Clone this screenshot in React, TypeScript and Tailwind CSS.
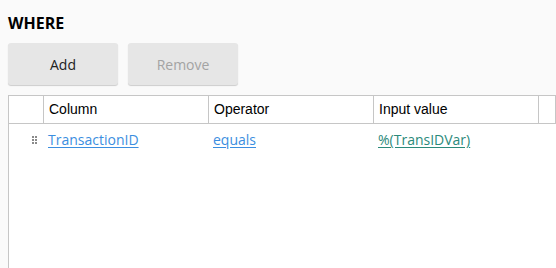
import React from "react";

const cols = "grid grid-cols-[35px_165px_165px_165px_1fr]";

function Grip() {
  return (
    <div className="grid grid-cols-2 gap-x-[1px] gap-y-[1px] w-[5px]">
      {[0, 1, 2, 3, 4, 5].map((i) => (
        <span key={i} className="w-[2px] h-[2px] bg-[#8a8a8a]"></span>
      ))}
    </div>
  );
}

export default function App() {
  return (
    <div className="w-[556px] h-[268px] overflow-hidden bg-[#fafafa] pl-2 pt-[12px] font-['Open_Sans',sans-serif]">
      <h2 className="text-[16px] leading-[22px] font-bold text-black">WHERE</h2>

      <div className="flex gap-[10px] mt-[9px]">
        <button className="w-[110px] h-[42px] rounded-[3px] bg-[#e6e6e6] shadow-[0_1px_1px_rgba(0,0,0,0.18)] text-[14px] text-[#222]">
          Add
        </button>
        <button className="w-[110px] h-[42px] rounded-[3px] bg-[#e6e6e6] shadow-[0_1px_1px_rgba(0,0,0,0.18)] text-[14px] text-[#a3a3a3]">
          Remove
        </button>
      </div>

      <div className="mt-[10px] h-[180px] bg-white border-l border-t border-[#c6c6c6]">
        <div className={`${cols} h-[28px] border-b border-[#c6c6c6] font-['Liberation_Sans',Arial,sans-serif] text-[14px] text-black`}>
          <div className="border-r border-[#c6c6c6]"></div>
          <div className="border-r border-[#c6c6c6] pl-[5px] flex items-center">Column</div>
          <div className="border-r border-[#c6c6c6] pl-[5px] flex items-center">Operator</div>
          <div className="border-r border-[#c6c6c6] pl-[5px] flex items-center">Input value</div>
          <div className="border-r border-[#c6c6c6]"></div>
        </div>

        <div className={`${cols} h-[30px] text-[14px]`}>
          <div className="flex items-center justify-end pr-[7px] pt-[2px]">
            <Grip />
          </div>
          <div className="pl-[4px] flex items-center">
            <a href="#" className="text-[#3b8ee0] underline underline-offset-2">TransactionID</a>
          </div>
          <div className="pl-[4px] flex items-center">
            <a href="#" className="text-[#3b8ee0] underline underline-offset-2">equals</a>
          </div>
          <div className="pl-[4px] flex items-center">
            <a href="#" className="text-[#2b8a7b] underline underline-offset-2">%(TransIDVar)</a>
          </div>
          <div></div>
        </div>
      </div>
    </div>
  );
}
